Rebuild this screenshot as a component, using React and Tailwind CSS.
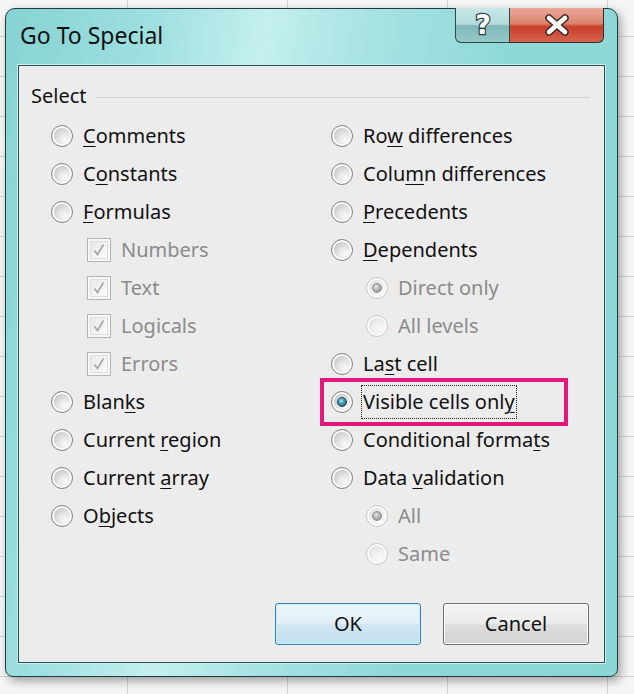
import React from 'react';

const LEFT = [
  { label: 'Comments', u: 0 },
  { label: 'Constants', u: 1 },
  { label: 'Formulas', u: 0 },
  { label: 'Numbers', check: true },
  { label: 'Text', check: true },
  { label: 'Logicals', check: true },
  { label: 'Errors', check: true },
  { label: 'Blanks', u: 4 },
  { label: 'Current region', u: 8 },
  { label: 'Current array', u: 8 },
  { label: 'Objects', u: 1 },
];

const RIGHT = [
  { label: 'Row differences', u: 2 },
  { label: 'Column differences', u: 4 },
  { label: 'Precedents', u: 0 },
  { label: 'Dependents', u: 0 },
  { label: 'Direct only', sub: true, checked: true, disabled: true },
  { label: 'All levels', sub: true, disabled: true },
  { label: 'Last cell', u: 2 },
  { label: 'Visible cells only', u: 17, checked: true, focus: true },
  { label: 'Conditional formats', u: 17 },
  { label: 'Data validation', u: 5 },
  { label: 'All', sub: true, checked: true, disabled: true },
  { label: 'Same', sub: true, disabled: true },
];

function Label({ text, u }) {
  if (u === undefined) return text;
  return (
    <>
      {text.slice(0, u)}
      <span className="underline decoration-1 underline-offset-[3px]">{text[u]}</span>
      {text.slice(u + 1)}
    </>
  );
}

function Radio({ checked, disabled }) {
  return (
    <span
      className={`flex h-[22px] w-[22px] shrink-0 items-center justify-center rounded-full border ${
        disabled ? 'border-[#c9c9c9]' : 'border-[#7f8081]'
      } bg-[#fbfbfb]`}
    >
      <span
        className={`flex h-[16px] w-[16px] items-center justify-center rounded-full ${
          disabled
            ? 'bg-[radial-gradient(circle_at_70%_75%,#fafafa_0%,#eeeeee_45%,#dcdcdc_100%)]'
            : 'bg-[radial-gradient(circle_at_70%_75%,#fafafa_0%,#e6e6e6_40%,#b9babb_100%)]'
        }`}
      >
        {checked && (
          <span
            className={`h-[10px] w-[10px] rounded-full border ${
              disabled
                ? 'border-[#8d8d8d] bg-[radial-gradient(circle_at_40%_35%,#e8e8e8_0%,#b4b4b4_45%,#8a8a8a_100%)]'
                : 'border-[#1b3d4a] bg-[radial-gradient(circle_at_40%_35%,#a6e6f2_0%,#3a98b4_45%,#0f4f66_100%)]'
            }`}
          />
        )}
      </span>
    </span>
  );
}

function Check() {
  return (
    <span className="flex h-[24px] w-[24px] shrink-0 items-center justify-center border border-[#b3b3b3] bg-[#f7f7f7]">
      <span className="flex h-[18px] w-[18px] items-center justify-center border border-[#dddddd] bg-[linear-gradient(135deg,#e9e9e9,#fbfbfb)]">
        <svg width="14" height="14" viewBox="0 0 14 14">
          <path d="M2.5 7.5 L5.5 11.5 L11.5 1.5" fill="none" stroke="#a4a4a4" strokeWidth="1.6" />
        </svg>
      </span>
    </span>
  );
}

function Row({ item, sub }) {
  const disabled = item.disabled || item.check;
  return (
    <div
      className={`relative flex h-[38px] items-center gap-[10px] ${sub ? 'pl-[35px]' : ''} ${
        item.check ? 'pl-[36px] gap-[8px]' : ''
      }`}
    >
      {item.focus && (
        <span className="absolute left-[-11px] top-[-5px] h-[48px] w-[248px] border-[4px] border-[#e3187c]" />
      )}
      {item.check ? <Check /> : <Radio checked={item.checked} disabled={disabled} />}
      <span
        className={`whitespace-nowrap leading-none ${disabled ? 'text-[#8b8b8b]' : 'text-[#111111]'} ${
          item.focus ? 'ml-[-2px] border border-dotted border-[#222222] px-[1px] py-[6px]' : ''
        }`}
      >
        <Label text={item.label} u={disabled ? undefined : item.u} />
      </span>
    </div>
  );
}

export default function App() {
  return (
    <div className="relative h-[694px] w-[634px] overflow-hidden bg-[#f5f5f5] bg-[linear-gradient(to_right,#d4d4d4_1px,transparent_1px),linear-gradient(to_bottom,#d4d4d4_1px,transparent_1px)] bg-[size:160px_40px] bg-[position:127px_36px] pl-[5px] pt-[8px] font-['Noto_Sans','Open_Sans',sans-serif]">
      <div className="flex h-[669px] w-[613px] flex-col rounded-t-[10px] rounded-b-[8px] border border-[#1f3b3d] bg-[linear-gradient(100deg,#86d3d3_0%,#9edfdf_20%,#c4efef_36%,#a8e3e3_50%,#8fd8d8_70%,#8ad5d5_100%)] shadow-[3px_4px_10px_rgba(0,0,0,0.35)]">
        {/* Title bar */}
        <div className="flex h-[56px] shrink-0 items-start justify-between">
          <div className="pl-[14px] pt-[15px] text-[23px] leading-none text-[#111111]">Go To Special</div>
          <div className="mr-[13px] flex h-[35px] -mt-px">
            <div className="flex w-[55px] items-center justify-center rounded-bl-[6px] border border-t-0 border-[#2c4849] bg-[linear-gradient(to_bottom,#c9e8e8_0%,#b2dada_48%,#7fb7b8_52%,#96c9c9_100%)]">
              <svg width="24" height="30" viewBox="0 0 24 30">
                <text
                  x="12"
                  y="24"
                  textAnchor="middle"
                  fontSize="27"
                  fontWeight="700"
                  fontFamily="DejaVu Sans, sans-serif"
                  fill="#ffffff"
                  stroke="#2e3b3c"
                  strokeWidth="2.4"
                  paintOrder="stroke"
                >
                  ?
                </text>
              </svg>
            </div>
            <div className="flex w-[94px] items-center justify-center rounded-br-[6px] border border-l-0 border-t-0 border-[#3a2a28] bg-[linear-gradient(to_bottom,#eaa898_0%,#dc8470_45%,#c8412c_55%,#d5634c_100%)]">
              <svg width="30" height="22" viewBox="0 0 30 22">
                <path d="M7 4 L23 18 M23 4 L7 18" stroke="#3a2522" strokeWidth="7.5" strokeLinecap="round" />
                <path d="M7 4 L23 18 M23 4 L7 18" stroke="#ffffff" strokeWidth="4.6" strokeLinecap="round" />
              </svg>
            </div>
          </div>
        </div>

        {/* Client area */}
        <div className="mx-[12px] mb-[13px] flex flex-1 flex-col border border-[#2e4f50] bg-[#ececec] text-[20px] outline outline-1 outline-[#c8f0f0]">
          <div className="flex h-[58px] items-center gap-[8px] pl-[12px] pr-[14px] pt-[1px]">
            <span className="leading-none text-[#111111]">Select</span>
            <span className="mt-[4px] h-px flex-1 bg-[#d2d2d2]" />
          </div>
          <div className="mt-[-7px] grid grid-cols-[280px_1fr] pl-[32px]">
            <div className="flex flex-col">
              {LEFT.map((it) => (
                <Row key={it.label} item={it} />
              ))}
            </div>
            <div className="flex flex-col">
              {RIGHT.map((it) => (
                <Row key={it.label} item={it} sub={it.sub} />
              ))}
            </div>
          </div>
          <div className="mt-auto flex justify-end gap-[22px] pb-[17px] pr-[15px]">
            <button className="h-[42px] w-[146px] rounded-[3px] border border-[#3c7fb1] bg-[linear-gradient(to_bottom,#ecf6fb_0%,#e1eff6_48%,#cfe6f1_52%,#c4e0ee_100%)] text-[20px] text-[#111111] shadow-[inset_0_0_0_1px_#bfeefc]">
              OK
            </button>
            <button className="h-[42px] w-[146px] rounded-[3px] border border-[#707070] bg-[linear-gradient(to_bottom,#f4f4f4_0%,#ececec_48%,#dddddd_52%,#d3d3d3_100%)] text-[20px] text-[#111111] shadow-[inset_0_0_0_1px_#fbfbfb]">
              Cancel
            </button>
          </div>
        </div>
      </div>
    </div>
  );
}
